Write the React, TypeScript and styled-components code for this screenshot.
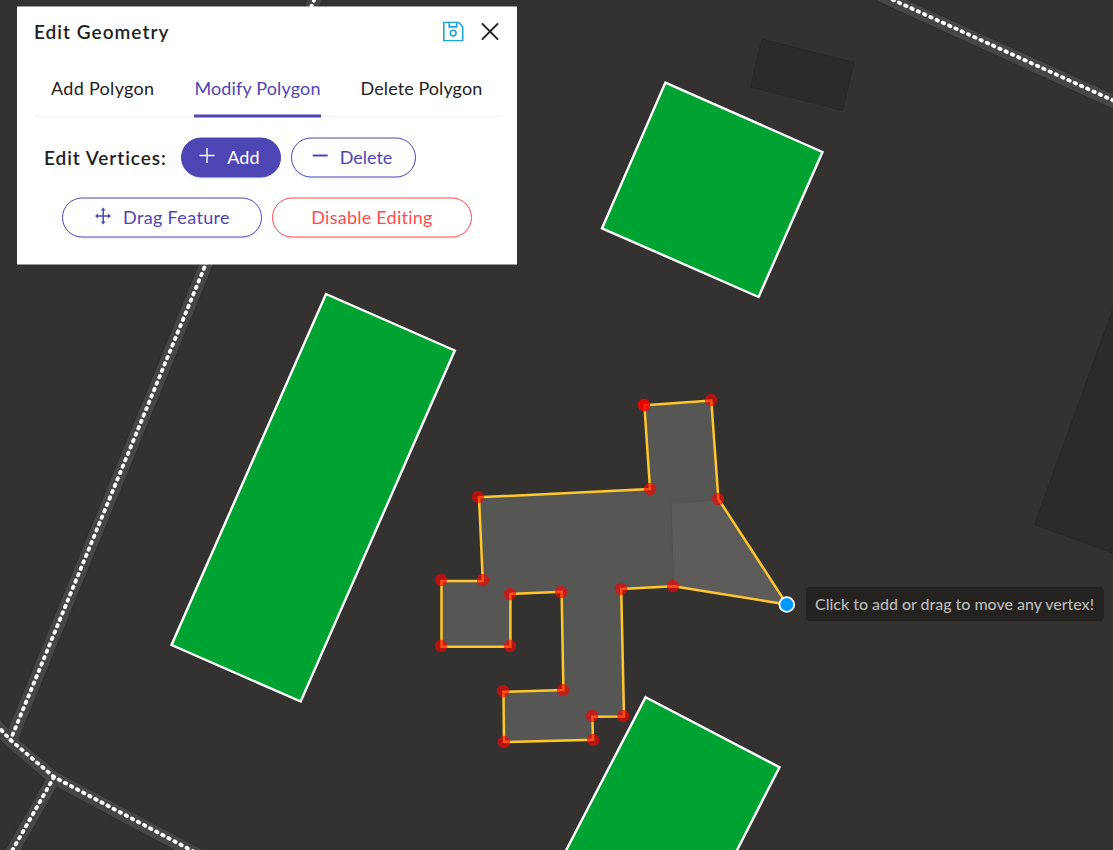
import React from "react";
import styled, { createGlobalStyle, css } from "styled-components";

const GlobalStyle = createGlobalStyle`
  body {
    margin: 0;
    overflow: hidden;
    background: #343230;
    font-family: Lato, "Liberation Sans", sans-serif;
  }
`;

const Screen = styled.main`
  position: relative;
  width: 1113px;
  height: 850px;
  overflow: hidden;
`;

const MapCanvas = styled.svg`
  display: block;
  width: 1113px;
  height: 850px;
`;

const Panel = styled.section`
  position: absolute;
  top: 6px;
  left: 17px;
  box-sizing: border-box;
  width: 500px;
  height: 258px;
  padding: 0 17px;
  background: #fff;
  color: #222;
  transform: translateY(0.5px);
`;

const PanelHeader = styled.header`
  display: flex;
  align-items: center;
  justify-content: space-between;
  box-sizing: border-box;
  height: 51px;
  padding: 0 1px 1px 0;
`;

const Title = styled.h2`
  margin: 0;
  font-size: 19px;
  font-weight: 600;
  letter-spacing: 1.03px;
  line-height: 24px;
`;

const HeaderActions = styled.div`
  display: flex;
  align-items: center;
  gap: 17px;
`;

const IconButton = styled.button<{ $color: string }>`
  display: flex;
  padding: 0;
  border: 0;
  background: none;
  color: ${(p) => p.$color};
`;

const Tabs = styled.nav`
  display: flex;
  gap: 40px;
  height: 58px;
  padding: 0 17px;
  border-bottom: 2px solid #f5f5f5;
`;

const Tab = styled.button<{ $active?: boolean; $width: number; $tracking: number }>`
  box-sizing: border-box;
  flex: none;
  width: ${(p) => p.$width}px;
  height: 60px;
  padding: 3px 0 0;
  border: 0;
  border-bottom: 3px solid ${(p) => (p.$active ? "#4e46b4" : "transparent")};
  background: none;
  color: ${(p) => (p.$active ? "#4e46b4" : "#222")};
  font: 400 18px/54px Lato, sans-serif;
  letter-spacing: ${(p) => p.$tracking}px;
  text-align: left;
  white-space: nowrap;
`;

const VertexRow = styled.div`
  display: flex;
  align-items: center;
  gap: 10px;
  margin-top: 20px;
  padding-left: 10px;
`;

const RowLabel = styled.span`
  width: 127px;
  padding-bottom: 1px;
  font-size: 19px;
  font-weight: 600;
  letter-spacing: 0.95px;
  white-space: nowrap;
`;

const ActionRow = styled.div`
  display: flex;
  justify-content: center;
  gap: 10px;
  margin-top: 20px;
`;

const tones = {
  solid: css`
    border-color: #4e46b4;
    background: #4e46b4;
    color: #fff;
  `,
  outline: css`
    border-color: #4e46b4;
    background: #fff;
    color: #4e46b4;
  `,
  danger: css`
    border-color: #ff4d4f;
    background: #fff;
    color: #ff4d4f;
  `,
};

const PillButton = styled.button<{
  $tone: keyof typeof tones;
  $width: number;
  $tracking: number;
  $padRight?: number;
}>`
  display: flex;
  align-items: center;
  justify-content: center;
  gap: 12px;
  box-sizing: border-box;
  width: ${(p) => p.$width}px;
  height: 40px;
  padding: 0 ${(p) => p.$padRight ?? 0}px 2px 0;
  border: 1px solid;
  border-radius: 20px;
  box-shadow: 0 2px 0 rgba(0, 0, 0, 0.043);
  font: 400 18px/24px Lato, sans-serif;
  letter-spacing: ${(p) => p.$tracking}px;
  white-space: nowrap;
  ${(p) => tones[p.$tone]}
`;

const Tooltip = styled.div`
  position: absolute;
  top: 587px;
  left: 806px;
  box-sizing: border-box;
  width: 298px;
  height: 34px;
  padding-left: 9px;
  border-radius: 4px;
  background: #232220;
  color: #b9b8b7;
  font-size: 16px;
  font-weight: 500;
  letter-spacing: -0.02px;
  line-height: 33px;
  white-space: nowrap;
`;

const SaveIcon = () => (
  <svg width="21" height="20" viewBox="0 0 21 20" fill="none" stroke="currentColor" strokeWidth="1.6">
    <path d="M.8.8h14.7l4.2 4.4v14H.8z" />
    <path d="M6.2.8v4.6h7.6V.8" />
    <circle cx="10.2" cy="11.6" r="2.9" />
  </svg>
);

const CloseIcon = () => (
  <svg width="18" height="18" viewBox="0 0 18 18" stroke="currentColor" strokeWidth="2">
    <path d="M.9.9l16.2 16.2M17.1.9.9 17.1" />
  </svg>
);

const PlusIcon = () => (
  <svg width="16" height="18" viewBox="0 0 16 18" stroke="currentColor" strokeWidth="1.4">
    <path d="M8 .5v15M.5 8h15" />
  </svg>
);

const MinusIcon = () => (
  <svg width="16" height="18" viewBox="0 0 16 18" stroke="currentColor" strokeWidth="1.9">
    <path d="M.7 8h15" />
  </svg>
);

const DragIcon = () => (
  <svg width="17" height="20" viewBox="0 0 17 20" fill="currentColor" stroke="currentColor">
    <g transform="translate(.4 0)">
      <path d="M8.8 2.5v14M2.8 9.5h12" strokeWidth="1.5" />
      <path
        stroke="none"
        d="M8.8 1l2.4 3H6.4zM8.8 18l-2.4-3h4.8zM.6 9.5l3-2.4v4.8zM16.6 9.5l-3 2.4V7.1z"
      />
    </g>
  </svg>
);

const parcels = [
  "326,294 454.8,350.5 300.7,701.5 171.5,645",
  "665.4,82.6 822.5,152 758.6,297 602,228.3",
  "645.6,697.2 779.5,767.2 735.6,853 564.7,853",
];

const outline =
  "644.4,405.3 711.3,400.5 718.4,499 787,604.5 673.5,586.2 621.2,589 624,716.4 592.4,716.8 593,739.8 504,742 503.5,691.8 563.4,690 561.6,591.8 510.4,594 510.4,646.7 441.5,646.7 441.5,581 482.8,581 479,497.3 650,489";

const vertices = [
  [644, 405], [644, 405], [711, 400], [718, 499], [673, 586], [621, 589], [623.3, 716],
  [592, 716], [593.3, 740], [504, 742], [503, 691], [563, 690], [561, 592],
  [510, 594], [510, 646], [441, 646], [441, 580], [483, 580], [478, 497], [650, 489],
];

const roads = [
  "M317 -7L10.5 740",
  "M-8 720L10.5 740L54 777L200 855",
  "M54 777L8 858",
  "M880 -6L1120 103.6",
];

export default function App() {
  return (
    <Screen>
      <GlobalStyle />
      <MapCanvas viewBox="0 0 1113 850">
        <rect width="1113" height="850" fill="#343230" />
        <g fill="#2c2b29" stroke="#292826">
          <path d="M762 39L854 62.5L842.5 110.5L750.5 87z" />
          <path d="M1118 295L1034.5 524.5L1118 555z" />
        </g>
        <g fill="none" transform="translate(0 1)">
          {roads.map((d) => <path key={d} d={d} stroke="#2f2e2c" strokeWidth="15" />)}
          {roads.map((d) => <path key={d} d={d} stroke="#464646" strokeWidth="12.8" />)}
        </g>
        <g fill="none" stroke="#fff" strokeWidth="3.8" strokeLinecap="round" strokeDasharray="1.5 5.4">
          {roads.map((d) => <path key={d} d={d} />)}
        </g>
        <g fill="#00a332" stroke="#fff" strokeWidth="2.4">
          {parcels.map((points) => <polygon key={points} points={points} />)}
        </g>
        <polygon points={outline} fill="#565654" />
        <polygon points="671,503 718.4,499.5 787,604.5 673.5,586.2" fill="#5e5c5a" />
        <path d="M718 500L671 503L673.5 586" fill="none" stroke="#52514f" />
        <polygon points={outline} fill="none" stroke="#ffc72c" strokeWidth="2.5" />
        <g fill="#f00" fillOpacity="0.62">
          {vertices.map(([x, y], i) => <circle key={i} cx={x} cy={y} r="6.2" />)}
        </g>
        <circle cx="786.8" cy="604.5" r="7.4" fill="#0099ff" stroke="#fff" strokeWidth="1.8" />
      </MapCanvas>

      <Panel>
        <PanelHeader>
          <Title>Edit Geometry</Title>
          <HeaderActions>
            <IconButton $color="#1ca5d8" aria-label="Save"><SaveIcon /></IconButton>
            <IconButton $color="#222" aria-label="Close"><CloseIcon /></IconButton>
          </HeaderActions>
        </PanelHeader>
        <Tabs>
          <Tab $width={103.4} $tracking={0.3}>Add Polygon</Tab>
          <Tab $width={126.2} $tracking={0.15} $active>Modify Polygon</Tab>
          <Tab $width={123} $tracking={0.08}>Delete Polygon</Tab>
        </Tabs>
        <VertexRow>
          <RowLabel>Edit Vertices:</RowLabel>
          <PillButton $tone="solid" $width={100} $tracking={0.2} $padRight={3}><PlusIcon />Add</PillButton>
          <PillButton $tone="outline" $width={125} $tracking={0} $padRight={3}><MinusIcon />Delete</PillButton>
        </VertexRow>
        <ActionRow>
          <PillButton $tone="outline" $width={200} $tracking={0.35}><DragIcon />Drag Feature</PillButton>
          <PillButton $tone="danger" $width={200} $tracking={0.25}>Disable Editing</PillButton>
        </ActionRow>
      </Panel>

      <Tooltip>Click to add or drag to move any vertex!</Tooltip>
    </Screen>
  );
}
